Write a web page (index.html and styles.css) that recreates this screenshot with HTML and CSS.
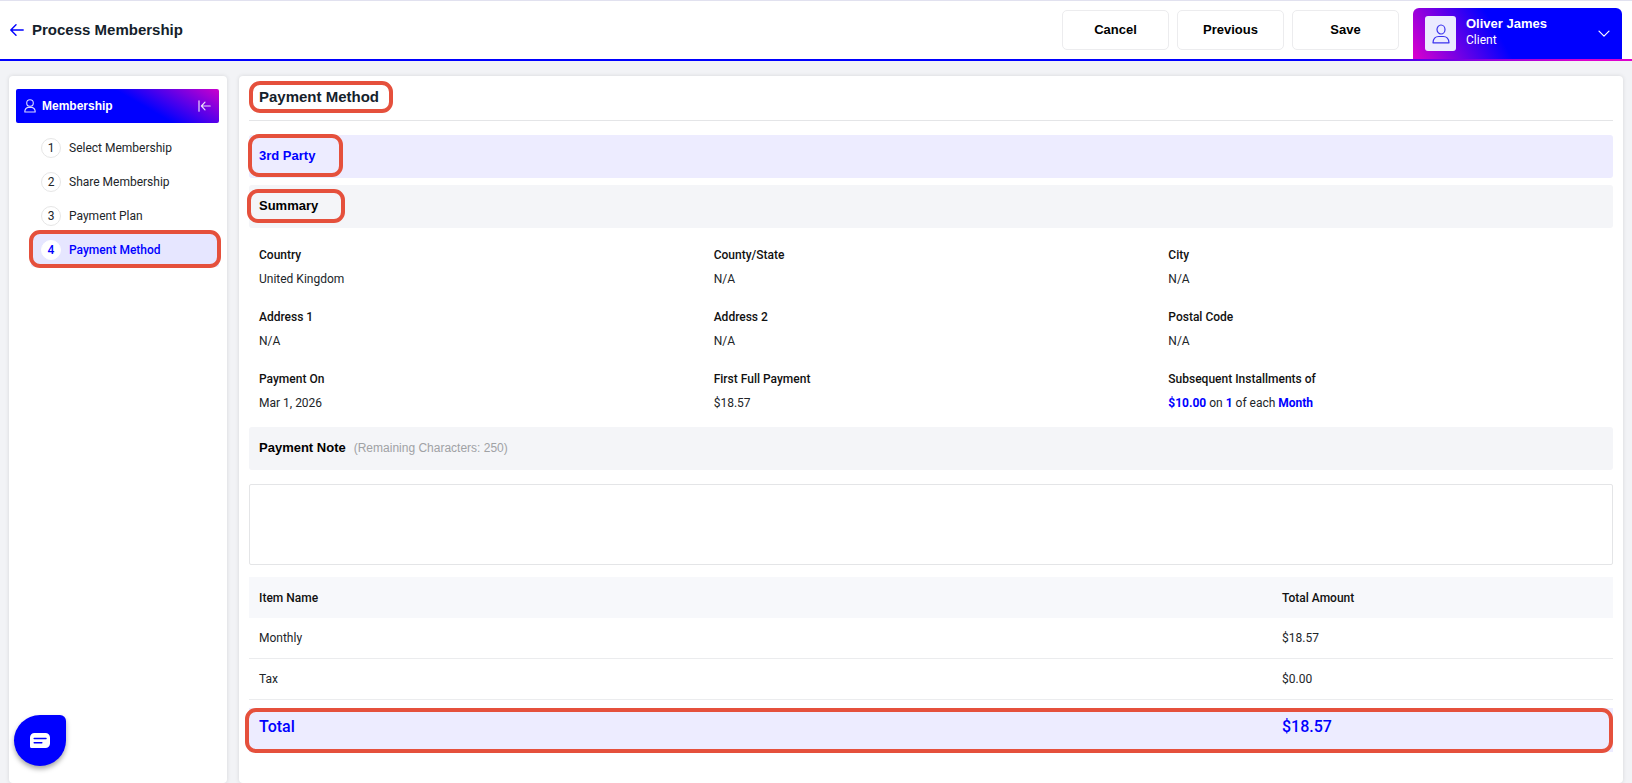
FILE: index.html
```
<!DOCTYPE html>
<html lang="en">
<head>
  <meta charset="UTF-8">
  <meta name="viewport" content="width=device-width, initial-scale=1.0">
  <title>Process Membership</title>
  <link rel="stylesheet" href="styles.css">
</head>
<body>
  <div class="page">
    <header class="topbar">
      <a href="#" class="back-link" aria-label="Back">
        <svg width="14" height="12" viewBox="0 0 14 12" fill="none" stroke="#0000ff" stroke-width="1.4" stroke-linecap="round" stroke-linejoin="round"><path d="M13.2 6H.9M6 .8.8 6 6 11.2"/></svg>
      </a>
      <h1 class="page-title">Process Membership</h1>
      <div class="actions">
        <button type="button" class="btn">Cancel</button>
        <button type="button" class="btn">Previous</button>
        <button type="button" class="btn">Save</button>
      </div>
      <button type="button" class="profile">
        <span class="avatar">
          <svg width="18" height="20" viewBox="0 0 18 20" fill="none" stroke="#3a32ee" stroke-width="1.2"><ellipse cx="9" cy="5.500" rx="4" ry="4.500"/><path d="M1 18.800c.2-4.300 2.500-6.300 5.800-6.300h4.400c3.300 0 5.600 2 5.800 6.300z" stroke-linejoin="round"/></svg>
        </span>
        <span class="profile-text">
          <span class="profile-name">Oliver James</span>
          <span class="profile-role">Client</span>
        </span>
        <svg class="chevron" width="12" height="8" viewBox="0 0 12 8" fill="none" stroke="#fff" stroke-width="1.2" stroke-linecap="round" stroke-linejoin="round"><path d="M1 1.200l5 5 5-5"/></svg>
      </button>
    </header>

    <div class="layout">
      <aside class="sidebar">
        <div class="side-head">
          <svg width="12" height="14" viewBox="0 0 12 14" fill="none" stroke="#fff" stroke-opacity=".85" stroke-width="1.100"><circle cx="6" cy="4" r="3.300"/><path d="M.8 13c0-2.600 1.200-4 3.200-4.600h4c2 .6 3.200 2 3.200 4.600z" stroke-linejoin="round"/></svg>
          <span class="side-title">Membership</span>
          <button type="button" class="collapse" aria-label="Collapse menu">
            <svg width="13" height="12" viewBox="0 0 13 12" fill="none" stroke="#fff" stroke-opacity=".85" stroke-width="1.200" stroke-linecap="round" stroke-linejoin="round"><path d="M1 .8v10.400M12.200 6H3.600M7 2.200 3.400 6 7 9.800"/></svg>
          </button>
        </div>
        <nav class="steps">
          <a href="#" class="step"><span class="num">1</span>Select Membership</a>
          <a href="#" class="step"><span class="num">2</span>Share Membership</a>
          <a href="#" class="step"><span class="num">3</span>Payment Plan</a>
          <a href="#" class="step active" aria-current="step"><span class="num">4</span>Payment Method<span class="mark mark-step"></span></a>
        </nav>
      </aside>

      <main class="content">
        <div class="content-head">
          <h2 class="marked">Payment Method<span class="mark mark-title"></span></h2>
        </div>

        <div class="bar bar-blue">
          <h3 class="marked">3rd Party<span class="mark mark-party"></span></h3>
        </div>
        <div class="bar bar-summary">
          <h3 class="marked">Summary<span class="mark mark-summary"></span></h3>
        </div>

        <dl class="details">
          <div class="detail"><dt>Country</dt><dd>United Kingdom</dd></div>
          <div class="detail"><dt>County/State</dt><dd>N/A</dd></div>
          <div class="detail"><dt>City</dt><dd>N/A</dd></div>
          <div class="detail"><dt>Address 1</dt><dd>N/A</dd></div>
          <div class="detail"><dt>Address 2</dt><dd>N/A</dd></div>
          <div class="detail"><dt>Postal Code</dt><dd>N/A</dd></div>
          <div class="detail"><dt>Payment On</dt><dd>Mar 1, 2026</dd></div>
          <div class="detail"><dt>First Full Payment</dt><dd>$18.57</dd></div>
          <div class="detail"><dt>Subsequent Installments of</dt><dd><b>$10.00</b> on <b>1</b> of each <b>Month</b></dd></div>
        </dl>

        <div class="bar">
          <label class="note-label" for="note">Payment Note</label>
          <span class="note-hint">(Remaining Characters: 250)</span>
        </div>
        <textarea id="note" class="note" maxlength="250"></textarea>

        <table class="items">
          <thead>
            <tr><th>Item Name</th><th class="amount">Total Amount</th></tr>
          </thead>
          <tbody>
            <tr><td>Monthly</td><td>$18.57</td></tr>
            <tr><td>Tax</td><td>$0.00</td></tr>
          </tbody>
          <tfoot>
            <tr class="spacer"><td colspan="2"></td></tr>
            <tr class="total"><td>Total<span class="mark mark-total"></span></td><td>$18.57</td></tr>
          </tfoot>
        </table>
      </main>
    </div>
  </div>

  <button type="button" class="chat" aria-label="Open chat">
    <svg width="20" height="16" viewBox="0 0 20 16"><path d="M4.500 0h11A4.500 4.500 0 0 1 20 4.500v6a4.500 4.500 0 0 1-4.500 4.500H1.500A1.500 1.500 0 0 1 0 13.500v-9A4.500 4.500 0 0 1 4.500 0z" fill="#fff"/><path d="M4.200 5.500h11.800M4.200 9.800h7.600" stroke="#0000ff" stroke-width="1.500" stroke-linecap="round"/></svg>
  </button>
</body>
</html>
```

FILE: styles.css
```
* {
  box-sizing: border-box;
}

body {
  margin: 0;
  font-family: Roboto, sans-serif;
  font-size: 12px;
  line-height: 16px;
  color: #212529;
  background: #f2f3f6;
}

h1,
h2,
h3,
dl,
dd {
  margin: 0;
}

a {
  color: inherit;
  text-decoration: none;
}

button {
  font: inherit;
  cursor: pointer;
}

.page {
  display: flex;
  flex-direction: column;
  min-height: 100vh;
}

/* top bar */
.topbar {
  display: flex;
  align-items: center;
  height: 61px;
  padding: 0 10px;
  background: #ffffff;
  border-bottom: 2px solid;
  border-image: linear-gradient(90deg, #0000ff 80%, #dd00cc 97%) 1;
  box-shadow: inset 0 1px #e1e1ef;
}

.back-link {
  display: flex;
  margin-right: 8px;
}

.page-title {
  font-family: "Liberation Sans", sans-serif;
  font-size: 15px;
  line-height: 20px;
  color: #14212b;
}

.actions {
  display: flex;
  gap: 8px;
  margin-left: auto;
}

.btn {
  width: 107px;
  height: 40px;
  font-family: "Liberation Sans", sans-serif;
  font-size: 13px;
  font-weight: 700;
  color: #000000;
  background: #ffffff;
  border: 1px solid #ececee;
  border-radius: 5px;
}

.profile {
  display: flex;
  align-items: center;
  align-self: flex-end;
  width: 209px;
  height: 51px;
  margin-left: 14px;
  padding: 0 12px;
  text-align: left;
  color: #ffffff;
  background: linear-gradient(60deg, #dd00cc 0%, #0000ff 42%);
  border: none;
  border-radius: 6px 6px 0 0;
}

.avatar {
  display: flex;
  align-items: center;
  justify-content: center;
  width: 31px;
  height: 35px;
  background: #ebebff;
  border-radius: 3px;
}

.profile-text {
  display: flex;
  flex-direction: column;
  margin-left: 10px;
  padding-bottom: 3px;
}

.profile-name {
  font-family: "Liberation Sans", sans-serif;
  font-size: 13px;
  font-weight: 700;
}

.chevron {
  margin-left: auto;
}

/* page body */
.layout {
  display: flex;
  flex: 1;
  gap: 12px;
  padding: 15px 9px 0;
}

.sidebar,
.content {
  background: #ffffff;
  border-radius: 4px;
  box-shadow: 0 0 4px rgba(0, 0, 0, 0.12);
}

.sidebar {
  flex: none;
  width: 218px;
  padding: 13px 8px 0 7px;
}

.side-head {
  display: flex;
  align-items: center;
  height: 34px;
  padding: 0 8px;
  color: #ffffff;
  background: linear-gradient(30deg, #0000ff 60%, #cc00cc 100%);
  border-radius: 2px;
}

.side-title {
  margin-left: 6px;
  font-family: "Liberation Sans", sans-serif;
  font-weight: 700;
}

.collapse {
  display: flex;
  margin-left: auto;
  padding: 0;
  background: none;
  border: none;
}

.steps {
  padding: 8px 0 0 15px;
}

.step {
  position: relative;
  display: flex;
  align-items: center;
  gap: 8px;
  height: 34px;
  padding-left: 10px;
}

.num {
  display: flex;
  align-items: center;
  justify-content: center;
  width: 20px;
  height: 20px;
  background: #ffffff;
  border: 1px solid #e6e6e6;
  border-radius: 50%;
}

.step.active {
  font-weight: 500;
  color: #0000ff;
  background: #e6e6ff;
  border-radius: 3px;
}

.step.active .num {
  border-color: #ffffff;
}

/* outlines around the parts being pointed at */
.marked {
  position: relative;
}

.mark {
  position: absolute;
  border: 4px solid #e5503c;
  border-radius: 11px;
  pointer-events: none;
}

.mark-step {
  inset: -3px -2px -1px -2px;
}

.mark-title {
  inset: -6px -14px -6px -10px;
}

.mark-party {
  inset: -14px -28px -13px -11px;
}

.mark-summary {
  inset: -9px -27px -9px -12px;
}

.mark-total {
  inset: 0 0 -1px -4px;
}

/* main panel */
.content {
  flex: 1;
  min-width: 0;
  padding: 0 10px 20px;
}

.content h2,
.content h3,
.note-label {
  font-family: "Liberation Sans", sans-serif;
  font-weight: 700;
}

.content-head {
  display: flex;
  align-items: center;
  height: 45px;
  margin-bottom: 14px;
  padding: 0 10px 2px;
  border-bottom: 1px solid #e4e5e7;
}

.content-head h2 {
  font-size: 15px;
  line-height: 20px;
  color: #14212b;
}

.bar {
  display: flex;
  align-items: center;
  gap: 8px;
  height: 43px;
  padding: 0 10px 2px;
  color: #000000;
  background: #f4f5f8;
  border-radius: 3px;
}

.bar h3,
.note-label {
  font-size: 13px;
  line-height: 16px;
}

.bar-blue {
  margin-bottom: 7px;
  color: #0000ff;
  background: #edecff;
}

.details {
  display: grid;
  grid-template-columns: repeat(3, 1fr);
  row-gap: 22px;
  padding: 19px 0 16px;
}

.detail {
  padding-left: 10px;
}

.detail dt {
  margin-bottom: 8px;
  font-weight: 500;
  color: #111111;
}

.detail b {
  font-weight: 700;
  color: #0000ff;
}

.note-hint {
  font-family: "Liberation Sans", sans-serif;
  font-size: 12px;
  color: #a0a2a5;
}

.note {
  display: block;
  width: 100%;
  height: 81px;
  margin: 14px 0 12px;
  padding: 8px;
  font: inherit;
  background: #ffffff;
  border: 1px solid #e4e5e7;
  border-radius: 2px;
  resize: none;
}

.items {
  width: 100%;
  table-layout: fixed;
  border-collapse: separate;
  border-spacing: 0;
}

.items th,
.items td {
  height: 41px;
  padding: 0 10px;
  text-align: left;
}

.items th {
  font-weight: 500;
  color: #111111;
  background: #f7f8fb;
}

.items .amount {
  width: 25%;
}

.items tbody td {
  border-bottom: 1px solid #ebecee;
}

.items .spacer td {
  height: 8px;
}

.items .total {
  position: relative;
}

.items .total td {
  height: 44px;
  padding-bottom: 6px;
  font-size: 16px;
  font-weight: 500;
  line-height: 20px;
  color: #0000ff;
  background: #edecff;
}

/* chat launcher */
.chat {
  position: fixed;
  bottom: 17px;
  left: 14px;
  display: flex;
  align-items: center;
  justify-content: center;
  width: 52px;
  height: 51px;
  padding: 0;
  background: #0000ff;
  border: none;
  border-radius: 50% 6px 50% 50%;
  box-shadow: 0 3px 5px rgba(0, 0, 0, 0.35);
}
```
